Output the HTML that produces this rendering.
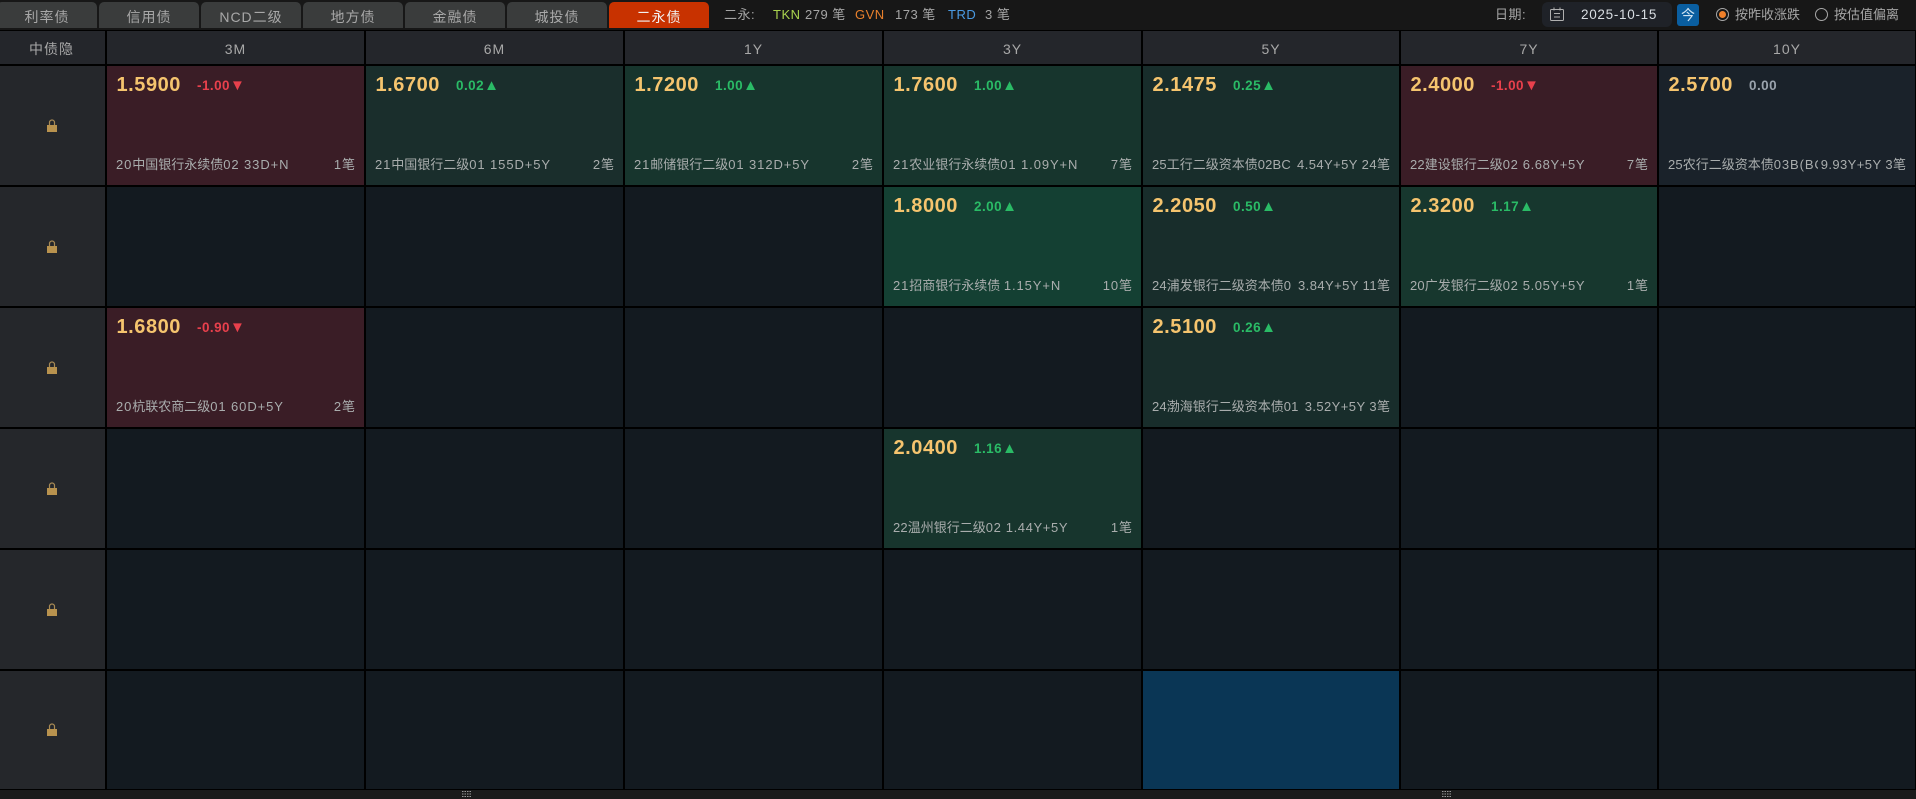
<!DOCTYPE html>
<html lang="zh"><head><meta charset="utf-8"><title>二永债</title>
<style>
html,body{margin:0;padding:0;background:#000;}
body{width:1916px;height:799px;overflow:hidden;position:relative;font-family:"Liberation Sans","Noto Sans CJK SC",sans-serif;color:#aaa;}
div,span,svg{position:absolute;box-sizing:border-box;white-space:nowrap;}
i{font-style:normal;letter-spacing:.9px;}
i.m{letter-spacing:.42px;}
i.n{letter-spacing:.62px;}
i.k{letter-spacing:.15px;}
b{font-size:15px;line-height:0;font-weight:normal;}
.top{left:0;top:0;width:1916px;height:30px;background:#171717;}
.tab{top:2px;width:100px;height:26px;background:#3a3c3c;border-radius:5px 5px 0 0;text-align:center;font-size:14px;letter-spacing:1px;line-height:31px;color:#a8a8a8;}
.tab.on{background:#c83200;color:#f2f2f2;}
.s{top:7px;font-size:13px;line-height:16px;color:#a5a5a5;letter-spacing:.5px;}
.h{top:31px;height:33px;background:#24262b;text-align:center;font-size:14px;letter-spacing:1px;line-height:37px;color:#a8a8a8;}
.l{left:0;width:105px;background:#25272b;}
.c{background:#131a20;}
.x1{left:107px;width:257px}.x2{left:366px;width:257px}.x3{left:625px;width:257px}.x4{left:884px;width:257px}.x5{left:1143px;width:256px}.x6{left:1401px;width:256px}.x7{left:1659px;width:256px}
.y1{top:66px;height:119px}.y2{top:187px;height:119px}.y3{top:308px;height:119px}.y4{top:429px;height:119px}.y5{top:550px;height:119px}.y6{top:671px;height:118px}
.red{background:#3a1d26}.g1{background:#1a2e2c}.g2{background:#17352d}.g3{background:#144033}.g4{background:#182d2b}.g5{background:#17372e}.n0{background:#1a222a}.blue{background:#0a3655}
.p{left:9.5px;top:7px;font-size:20px;font-weight:bold;letter-spacing:.55px;line-height:24px;color:#f5c46e;}
.d{left:90px;top:11px;font-size:13.5px;font-weight:bold;line-height:18px;letter-spacing:.45px;}
.up{color:#2abb66}.dn{color:#e8404c}.zr{color:#9aa3ad}
.t{left:9px;top:90px;font-size:13px;line-height:18px;color:#a9adad;overflow:hidden;}
.r{right:9px;top:90px;font-size:13px;line-height:18px;color:#a9adad;}
.lock{left:47px;width:10px;height:13px;}
.bot{left:0;top:790px;width:1916px;height:9px;background:#1b1b1b;}
.grip{top:1px;width:9px;height:6px;}
</style></head><body>
<div class="top"></div>
<div class="tab" style="left:-3px">利率债</div>
<div class="tab" style="left:99px">信用债</div>
<div class="tab" style="left:201px">NCD二级</div>
<div class="tab" style="left:303px">地方债</div>
<div class="tab" style="left:405px">金融债</div>
<div class="tab" style="left:507px">城投债</div>
<div class="tab on" style="left:609px">二永债</div>
<span class="s" style="left:724px">二永:</span>
<span class="s" style="left:773px;color:#a9d24e">TKN</span>
<span class="s" style="left:805px">279 笔</span>
<span class="s" style="left:855px;color:#e8802c">GVN</span>
<span class="s" style="left:895px">173 笔</span>
<span class="s" style="left:948px;color:#4a9ae2">TRD</span>
<span class="s" style="left:985px">3 笔</span>
<span class="s" style="left:1495px">日期:</span>
<div style="left:1542px;top:2px;width:130px;height:25px;background:#1f2228;border-radius:6px"></div>
<svg style="left:1550px;top:7px" width="14" height="14" viewBox="0 0 14 14" fill="none" stroke="#b0b0b0"><rect x=".5" y="2.5" width="13" height="11" rx="1"/><path d="M4 .5v3M10 .5v3M4 6.5h6M4 10h6"/></svg>
<span class="s" style="left:1581px;top:7px;color:#d8dde2;font-size:13.5px;letter-spacing:.7px">2025-10-15</span>
<div style="left:1677px;top:4px;width:22px;height:22px;background:#0a5ea0;border-radius:3px;text-align:center;font-size:14px;line-height:22px;color:#cfe3f2">今</div>
<div style="left:1716px;top:8px;width:13px;height:13px;border:1px solid #a8a8a8;border-radius:50%"></div>
<div style="left:1719px;top:11px;width:7px;height:7px;background:#f0802a;border-radius:50%"></div>
<span class="s" style="left:1735px;letter-spacing:0">按昨收涨跌</span>
<div style="left:1815px;top:8px;width:13px;height:13px;border:1px solid #a8a8a8;border-radius:50%"></div>
<span class="s" style="left:1834px;letter-spacing:0">按估值偏离</span>

<div class="h" style="left:0;width:105px;padding-right:2px">中债隐</div>
<div class="h x1">3M</div><div class="h x2">6M</div><div class="h x3">1Y</div><div class="h x4">3Y</div><div class="h x5">5Y</div><div class="h x6">7Y</div><div class="h x7">10Y</div>

<div class="l y1"><svg class="lock" style="top:53px" viewBox="0 0 10 13"><path d="M2.5 7V3.5a2.5 2.5 0 0 1 5 0V7" fill="none" stroke="#a88a55" stroke-width="1.2"/><rect y="6" width="10" height="7" fill="#b8924e"/></svg></div>
<div class="l y2"><svg class="lock" style="top:53px" viewBox="0 0 10 13"><path d="M2.5 7V3.5a2.5 2.5 0 0 1 5 0V7" fill="none" stroke="#a88a55" stroke-width="1.2"/><rect y="6" width="10" height="7" fill="#b8924e"/></svg></div>
<div class="l y3"><svg class="lock" style="top:53px" viewBox="0 0 10 13"><path d="M2.5 7V3.5a2.5 2.5 0 0 1 5 0V7" fill="none" stroke="#a88a55" stroke-width="1.2"/><rect y="6" width="10" height="7" fill="#b8924e"/></svg></div>
<div class="l y4"><svg class="lock" style="top:53px" viewBox="0 0 10 13"><path d="M2.5 7V3.5a2.5 2.5 0 0 1 5 0V7" fill="none" stroke="#a88a55" stroke-width="1.2"/><rect y="6" width="10" height="7" fill="#b8924e"/></svg></div>
<div class="l y5"><svg class="lock" style="top:53px" viewBox="0 0 10 13"><path d="M2.5 7V3.5a2.5 2.5 0 0 1 5 0V7" fill="none" stroke="#a88a55" stroke-width="1.2"/><rect y="6" width="10" height="7" fill="#b8924e"/></svg></div>
<div class="l y6"><svg class="lock" style="top:52px" viewBox="0 0 10 13"><path d="M2.5 7V3.5a2.5 2.5 0 0 1 5 0V7" fill="none" stroke="#a88a55" stroke-width="1.2"/><rect y="6" width="10" height="7" fill="#b8924e"/></svg></div>

<!-- row 1 -->
<div class="c x1 y1 red"><span class="p">1.5900</span><span class="d dn">-1.00<b>▼</b></span><span class="t"><i>20</i>中国银行永续债<i>02 33D+N</i></span><span class="r"><i>1</i>笔</span></div>
<div class="c x2 y1 g1"><span class="p">1.6700</span><span class="d up">0.02<b>▲</b></span><span class="t"><i>21</i>中国银行二级<i>01 155D+5Y</i></span><span class="r"><i>2</i>笔</span></div>
<div class="c x3 y1 g2"><span class="p">1.7200</span><span class="d up">1.00<b>▲</b></span><span class="t"><i>21</i>邮储银行二级<i>01 312D+5Y</i></span><span class="r"><i>2</i>笔</span></div>
<div class="c x4 y1 g2"><span class="p">1.7600</span><span class="d up">1.00<b>▲</b></span><span class="t"><i>21</i>农业银行永续债<i>01 1.09Y+N</i></span><span class="r"><i>7</i>笔</span></div>
<div class="c x5 y1 g4"><span class="p">2.1475</span><span class="d up">0.25<b>▲</b></span><span class="t"><i class="k">25</i>工行二级资本债<i class="k">02BC</i></span><span class="r"><i class="m">4.54Y+5Y 24</i>笔</span></div>
<div class="c x6 y1 red"><span class="p">2.4000</span><span class="d dn">-1.00<b>▼</b></span><span class="t"><i class="k">22</i>建设银行二级<i class="n">02 6.68Y+5Y</i></span><span class="r"><i>7</i>笔</span></div>
<div class="c x7 y1 n0"><span class="p">2.5700</span><span class="d zr">0.00</span><span class="t" style="width:150px"><i class="k">25</i>农行二级资本债<i>03B(BC</i></span><span class="r"><i class="m">9.93Y+5Y 3</i>笔</span></div>
<!-- row 2 -->
<div class="c x1 y2"></div><div class="c x2 y2"></div><div class="c x3 y2"></div>
<div class="c x4 y2 g3"><span class="p">1.8000</span><span class="d up">2.00<b>▲</b></span><span class="t"><i>21</i>招商银行永续债 <i>1.15Y+N</i></span><span class="r"><i>10</i>笔</span></div>
<div class="c x5 y2 g4"><span class="p">2.2050</span><span class="d up">0.50<b>▲</b></span><span class="t"><i class="k">24</i>浦发银行二级资本债<i class="k">0</i></span><span class="r"><i class="m">3.84Y+5Y 11</i>笔</span></div>
<div class="c x6 y2 g5"><span class="p">2.3200</span><span class="d up">1.17<b>▲</b></span><span class="t"><i class="k">20</i>广发银行二级<i class="n">02 5.05Y+5Y</i></span><span class="r"><i>1</i>笔</span></div>
<div class="c x7 y2"></div>
<!-- row 3 -->
<div class="c x1 y3 red"><span class="p">1.6800</span><span class="d dn">-0.90<b>▼</b></span><span class="t"><i>20</i>杭联农商二级<i>01 60D+5Y</i></span><span class="r"><i>2</i>笔</span></div>
<div class="c x2 y3"></div><div class="c x3 y3"></div><div class="c x4 y3"></div>
<div class="c x5 y3 g4"><span class="p">2.5100</span><span class="d up">0.26<b>▲</b></span><span class="t"><i class="k">24</i>渤海银行二级资本债<i class="k">01</i></span><span class="r"><i class="m">3.52Y+5Y 3</i>笔</span></div>
<div class="c x6 y3"></div><div class="c x7 y3"></div>
<!-- row 4 -->
<div class="c x1 y4"></div><div class="c x2 y4"></div><div class="c x3 y4"></div>
<div class="c x4 y4 g2"><span class="p">2.0400</span><span class="d up">1.16<b>▲</b></span><span class="t"><i class="k">22</i>温州银行二级<i class="n">02 1.44Y+5Y</i></span><span class="r"><i>1</i>笔</span></div>
<div class="c x5 y4"></div><div class="c x6 y4"></div><div class="c x7 y4"></div>
<!-- row 5 -->
<div class="c x1 y5"></div><div class="c x2 y5"></div><div class="c x3 y5"></div><div class="c x4 y5"></div><div class="c x5 y5"></div><div class="c x6 y5"></div><div class="c x7 y5"></div>
<!-- row 6 -->
<div class="c x1 y6"></div><div class="c x2 y6"></div><div class="c x3 y6"></div><div class="c x4 y6"></div><div class="c x5 y6 blue"></div><div class="c x6 y6"></div><div class="c x7 y6"></div>

<div class="bot">
<svg class="grip" style="left:462px" viewBox="0 0 9 6"><path d="M0 .5h9M0 3h9M0 5.5h9" stroke="#999" stroke-dasharray="1.5 1"/></svg>
<svg class="grip" style="left:1442px" viewBox="0 0 9 6"><path d="M0 .5h9M0 3h9M0 5.5h9" stroke="#999" stroke-dasharray="1.5 1"/></svg>
</div>
</body></html>
